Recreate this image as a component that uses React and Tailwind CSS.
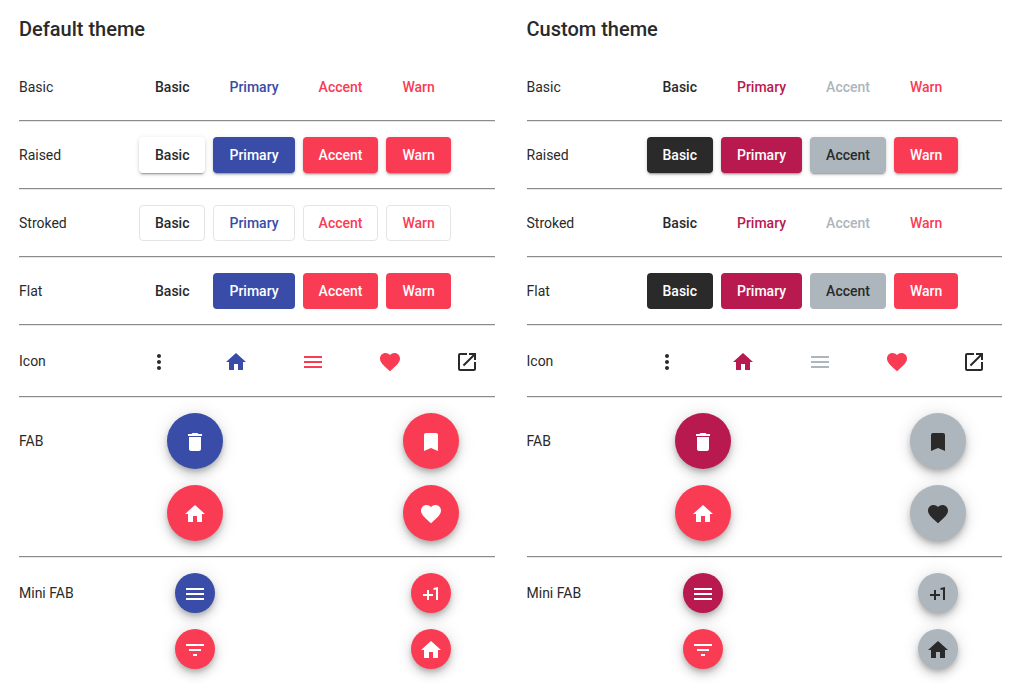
import React from "react";
import {
  MdBookmark,
  MdDelete,
  MdFavorite,
  MdFilterList,
  MdMenu,
  MdMoreVert,
  MdOpenInNew,
  MdPlusOne,
} from "react-icons/md";

function HomeIcon({ className }) {
  return (
    <svg viewBox="0 0 24 24" fill="currentColor" className={className} aria-hidden="true">
      <path d="M10 20v-6h4v6h5v-8h3L12 3 2 12h3v8z" />
    </svg>
  );
}

const RAISED =
  "shadow-[0_3px_1px_-2px_rgba(0,0,0,0.2),0_2px_2px_0_rgba(0,0,0,0.14),0_1px_5px_0_rgba(0,0,0,0.12)]";
const FLOATING =
  "shadow-[0_3px_5px_-1px_rgba(0,0,0,0.2),0_6px_10px_0_rgba(0,0,0,0.14),0_1px_18px_0_rgba(0,0,0,0.12)]";

const THEMES = [
  {
    title: "Default theme",
    text: {
      Basic: "text-[#2a2a2a]",
      Primary: "text-[#384ca8]",
      Accent: "text-[#f93c54]",
      Warn: "text-[#f93c54]",
    },
    fill: {
      Basic: "bg-white text-[#2a2a2a]",
      Primary: "bg-[#384ca8] text-white",
      Accent: "bg-[#f93c54] text-white",
      Warn: "bg-[#f93c54] text-white",
    },
    stroke: "border-[#e4e4e6]",
  },
  {
    title: "Custom theme",
    text: {
      Basic: "text-[#2a2a2a]",
      Primary: "text-[#b8194f]",
      Accent: "text-[#adb5bd]",
      Warn: "text-[#f93c54]",
    },
    fill: {
      Basic: "bg-[#2a2a2a] text-white",
      Primary: "bg-[#b8194f] text-white",
      Accent: "bg-[#adb5bd] text-[#2a2a2a]",
      Warn: "bg-[#f93c54] text-white",
    },
    stroke: "border-transparent",
  },
];

const COLORS = ["Basic", "Primary", "Accent", "Warn"];

const ICONS = [
  { name: "More", Icon: MdMoreVert, color: "Basic" },
  { name: "Home", Icon: HomeIcon, color: "Primary" },
  { name: "Menu", Icon: MdMenu, color: "Accent" },
  { name: "Favorite", Icon: MdFavorite, color: "Warn" },
  { name: "Open in new window", Icon: MdOpenInNew, color: "Basic" },
];

const FABS = [
  { name: "Delete", Icon: MdDelete, color: "Primary" },
  { name: "Bookmark", Icon: MdBookmark, color: "Accent" },
  { name: "Home", Icon: HomeIcon, color: "Warn" },
  { name: "Favorite", Icon: MdFavorite, color: "Accent" },
];

const MINI_FABS = [
  { name: "Menu", Icon: MdMenu, color: "Primary" },
  { name: "Plus one", Icon: MdPlusOne, color: "Accent" },
  { name: "Filter", Icon: MdFilterList, color: "Warn" },
  { name: "Home", Icon: HomeIcon, color: "Accent" },
];

function Row({ label, leading = "leading-9", children }) {
  return (
    <div className="flex items-start py-[15px]">
      <div className={`w-[120px] shrink-0 ${leading}`}>{label}</div>
      <div className="min-w-0 flex-1">{children}</div>
    </div>
  );
}

function Divider() {
  return <hr className="border-t border-b border-t-[#8c8c8c] border-b-[#e6e6e6]" />;
}

function ButtonRow({ label, styleFor }) {
  return (
    <Row label={label}>
      <div className="flex gap-2">
        {COLORS.map((color) => (
          <button
            key={color}
            type="button"
            className={`h-9 rounded border px-[15px] font-medium ${styleFor(color)}`}
          >
            {color}
          </button>
        ))}
      </div>
    </Row>
  );
}

function FabGrid({ items, size, fill }) {
  return (
    <div className="grid grid-cols-[112px_112px] justify-between justify-items-center gap-y-4 pr-2">
      {items.map(({ name, Icon, color }) => (
        <button
          key={name}
          type="button"
          aria-label={name}
          className={`flex items-center justify-center rounded-full pt-0.5 ${size} ${FLOATING} ${fill[color]}`}
        >
          <Icon className="size-6" />
        </button>
      ))}
    </div>
  );
}

function ThemePanel({ theme }) {
  return (
    <section className="min-w-0 flex-1">
      <h2 className="mb-[9px] text-xl leading-8 font-medium">{theme.title}</h2>
      <ButtonRow
        label="Basic"
        styleFor={(c) => `border-transparent ${theme.text[c]}`}
      />
      <Divider />
      <ButtonRow
        label="Raised"
        styleFor={(c) => `border-transparent ${theme.fill[c]} ${RAISED}`}
      />
      <Divider />
      <ButtonRow
        label="Stroked"
        styleFor={(c) => `${theme.stroke} ${theme.text[c]}`}
      />
      <Divider />
      <ButtonRow
        label="Flat"
        styleFor={(c) => `border-transparent ${theme.fill[c]}`}
      />
      <Divider />
      <Row label="Icon" leading="leading-10">
        <div className="flex justify-between pr-2">
          {ICONS.map(({ name, Icon, color }) => (
            <button
              key={name}
              type="button"
              aria-label={name}
              className={`flex size-10 items-center justify-center rounded-full pt-0.5 ${theme.text[color]}`}
            >
              <Icon className="size-6" />
            </button>
          ))}
        </div>
      </Row>
      <Divider />
      <Row label="FAB" leading="leading-14">
        <FabGrid items={FABS} size="size-14" fill={theme.fill} />
      </Row>
      <Divider />
      <Row label="Mini FAB" leading="leading-10">
        <FabGrid items={MINI_FABS} size="size-10" fill={theme.fill} />
      </Row>
    </section>
  );
}

export default function App() {
  return (
    <main className="flex gap-8 bg-white pt-[13px] pr-[14px] pl-[19px] font-['Roboto',sans-serif] text-sm text-[#2a2a2a]">
      {THEMES.map((theme) => (
        <ThemePanel key={theme.title} theme={theme} />
      ))}
    </main>
  );
}
